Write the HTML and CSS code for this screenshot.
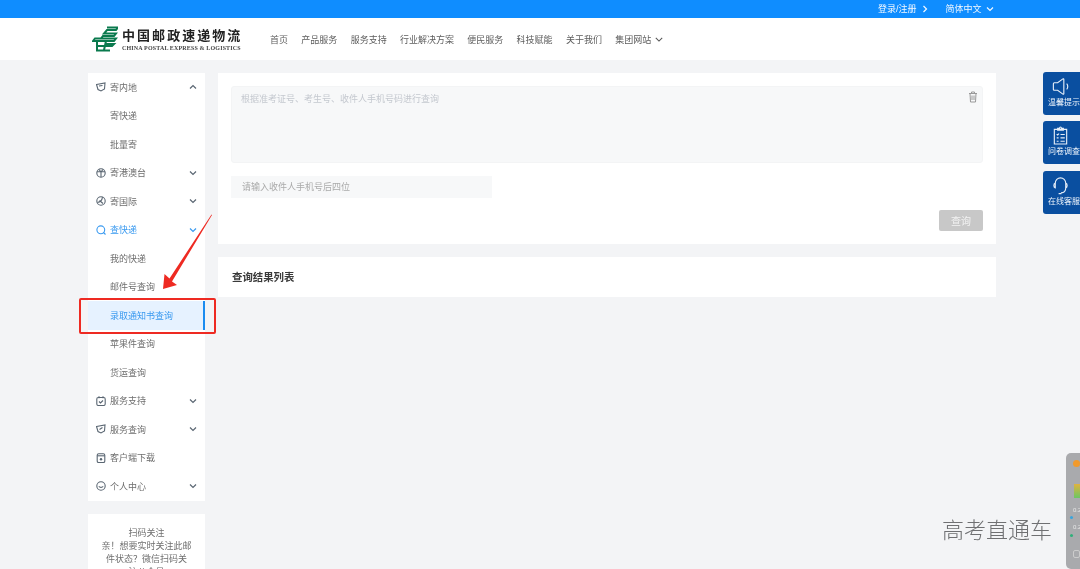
FILE: index.html
```html
<!DOCTYPE html>
<html lang="zh-CN">
<head>
<meta charset="utf-8">
<title>中国邮政速递物流</title>
<link rel="stylesheet" href="styles.css">
</head>
<body>
<div class="page">
  <div class="topbar">
    <span>登录/注册</span>
    <svg class="chev-r" viewBox="0 0 6 8"><path d="M1.500 1l3 3-3 3"/></svg>
    <span class="lang">简体中文</span>
    <svg class="chev-d" viewBox="0 0 8 6"><path d="M1 1.500l3 3 3-3"/></svg>
  </div>
  <header class="header">
    <div class="logo">
      <svg class="logo-mark" viewBox="0 0 26 26"><path d="M15 1.500h11L24 4H15L12 7.500h12L22 10H11L9 12.500H24L22 15H1L3 12.500H9M5 15v9.500h13M5 20h15l2-2H14M14 15l-2 9"/></svg>
      <div class="logo-text">
        <div class="logo-cn">中国邮政速递物流</div>
        <div class="logo-en">CHINA POSTAL EXPRESS &amp; LOGISTICS</div>
      </div>
    </div>
    <nav class="nav">
      <a>首页</a><a>产品服务</a><a>服务支持</a><a>行业解决方案</a><a>便民服务</a><a>科技赋能</a><a>关于我们</a>
      <a class="nav-more">集团网站<svg viewBox="0 0 10 6"><path d="M1 1l4 4 4-4"/></svg></a>
    </nav>
  </header>
  <main class="layout">
    <aside class="side">
      <ul class="menu">
        <li class="row"><svg class="ico" viewBox="0 0 10 10"><path d="M.5 2.500l8.500-1.500-.5 6-3.500 2L2 7.500zM3 4l3.500-.5"/></svg><span>寄内地</span><svg class="arrow" viewBox="0 0 8 6"><path d="M1 4.500l3-3 3 3"/></svg></li>
        <li class="row sub"><span>寄快递</span></li>
        <li class="row sub"><span>批量寄</span></li>
        <li class="row"><svg class="ico" viewBox="0 0 10 10"><circle cx="5" cy="5" r="4.200"/><path d="M1 3.800h8M5 3.800v5.200M3 1.500l2 2.300 2-2.300"/></svg><span>寄港澳台</span><svg class="arrow" viewBox="0 0 8 6"><path d="M1 1.500l3 3 3-3"/></svg></li>
        <li class="row"><svg class="ico" viewBox="0 0 10 10"><circle cx="5" cy="5" r="4.200"/><path d="M1.500 6.500C4 6.200 6 4.500 6.500 1.200M3.500 4.500l3.500 3"/></svg><span>寄国际</span><svg class="arrow" viewBox="0 0 8 6"><path d="M1 1.500l3 3 3-3"/></svg></li>
        <li class="row on"><svg class="ico" viewBox="0 0 10 10"><circle cx="4.800" cy="4.800" r="3.900"/><path d="M7.500 7.500l2 2"/></svg><span>查快递</span><svg class="arrow" viewBox="0 0 8 6"><path d="M1 1.500l3 3 3-3"/></svg></li>
        <li class="row sub"><span>我的快递</span></li>
        <li class="row sub"><span>邮件号查询</span></li>
        <li class="row sub active"><span>录取通知书查询</span></li>
        <li class="row sub"><span>苹果件查询</span></li>
        <li class="row sub"><span>货运查询</span></li>
        <li class="row"><svg class="ico" viewBox="0 0 10 10"><rect x=".8" y="1.500" width="8.400" height="8" rx="1.500"/><path d="M3 5.500l1.500 1.500L7 4.500M3 .3v2M7 .3v2"/></svg><span>服务支持</span><svg class="arrow" viewBox="0 0 8 6"><path d="M1 1.500l3 3 3-3"/></svg></li>
        <li class="row"><svg class="ico" viewBox="0 0 10 10"><path d="M.5 2.500l8.500-1.500-.5 6-3.500 2L2 7.500zM3.500 5.500L6.500 3.500"/></svg><span>服务查询</span><svg class="arrow" viewBox="0 0 8 6"><path d="M1 1.500l3 3 3-3"/></svg></li>
        <li class="row"><svg class="ico" viewBox="0 0 10 10"><rect x="1.200" y=".8" width="7.600" height="8.800" rx="1.500"/><path d="M1.200 2.800h7.600"/><circle class="ico-dot" cx="5" cy="6.200" r="1.200"/></svg><span>客户端下载</span></li>
        <li class="row"><svg class="ico" viewBox="0 0 10 10"><circle cx="5" cy="5" r="4.200"/><path d="M2.800 5.200c1 1.500 3.400 1.500 4.400 0"/></svg><span>个人中心</span><svg class="arrow" viewBox="0 0 8 6"><path d="M1 1.500l3 3 3-3"/></svg></li>
      </ul>
      <div class="qr-card">扫码关注<br>亲！想要实时关注此邮<br>件状态？微信扫码关<br>注公众号</div>
    </aside>
    <section class="content">
      <div class="card form">
        <div class="textarea">
          <span>根据准考证号、考生号、收件人手机号码进行查询</span>
          <svg class="trash" viewBox="0 0 10 12"><path d="M1 2.500h8M3.500 2.500V1h3v1.500M2 2.500l.5 8.500h5l.5-8.500M4 4.500V9M6 4.500V9"/></svg>
        </div>
        <div class="input">请输入收件人手机号后四位</div>
        <div class="actions"><button class="btn">查询</button></div>
      </div>
      <div class="card result">查询结果列表</div>
    </section>
  </main>

  <div class="float-tools">
    <div class="tool"><svg viewBox="0 0 20 18"><path d="M2.500 6c0-.8.5-1 1-1H7l5.500-4c.5-.3 1 0 1 .5v15c0 .5-.5.8-1 .5L7 13H3.500c-.5 0-1-.3-1-1zM16.500 6c1.500 1.500 1.500 4.500 0 6"/></svg><span>温馨提示</span></div>
    <div class="tool"><svg viewBox="0 0 20 20"><path d="M3.500 3.500h13V19h-13zM7 4.500V2.500h2c0-2 2-2 2 0h2v2zM6 8.500l1 1 1.500-1.500M10 9h4.500M6 12.500h2M10 12.500h4.500M6 16h2M10 16h4.500"/></svg><span>问卷调查</span></div>
    <div class="tool"><svg viewBox="0 0 20 20"><path d="M4.500 9V7.500a5.500 5.500 0 0 1 11 0V9M4.500 7.500C2.500 8 2.500 12 4.500 12.500ZM15.500 7.500c2 .5 2 4.500 0 5ZM15.500 12.500c0 3-2 5-5 5.200M8 18.500h3"/></svg><span>在线客服</span></div>
  </div>

  <div class="red-box"></div>
  <svg class="red-arrow" viewBox="0 0 60 85"><path class="head" d="M52 3L12 69.500 17 73 3 77 4.500 62 9.500 66.500 51.500 2.500z"/></svg>

  <div class="widget">
    <i class="w-badge"></i>
    <i class="w-thumb"></i>
    <b class="w-num w-n1">0.2</b>
    <i class="w-dot w-d1"></i>
    <b class="w-num w-n2">0.2</b>
    <i class="w-dot w-d2"></i>
    <i class="w-cam"></i>
  </div>
  <div class="watermark">高考直通车</div>
</div>
</body>
</html>
```
FILE: styles.css
```css
* { box-sizing: border-box; }
html, body { margin: 0; padding: 0; }
body { font-family: "Liberation Sans", "Noto Sans CJK SC", sans-serif; background: #f3f4f6; overflow: hidden; }
.page { position: relative; width: 1080px; height: 569px; overflow: hidden; background: #f3f4f6; filter: blur(.5px); color: #6e6e6e; font-size: 9px; }
svg { fill: none; display: block; }

.topbar { height: 18px; background: #0f8dff; color: #f2f8ff; display: flex; align-items: center; padding-left: 878px; line-height: 18px; }
.topbar svg { stroke: #f2f8ff; stroke-width: 1.200; }
.chev-r { width: 6px; height: 8px; margin-left: 5px; }
.lang { margin-left: 18px; }
.chev-d { width: 8px; height: 6px; margin-left: 4px; }

.header { height: 42px; background: #fff; display: flex; align-items: center; padding-left: 92px; }
.logo { display: flex; align-items: center; width: 178px; }
.logo-mark { width: 26px; height: 26px; stroke: #0a7a4e; stroke-width: 2; flex: none; }
.logo-text { margin-left: 4px; white-space: nowrap; }
.logo-cn { font-size: 13px; line-height: 15px; font-weight: 700; color: #222; letter-spacing: 2.050px; font-family: "Noto Sans CJK SC", sans-serif; }
.logo-en { font-family: "Liberation Serif", serif; font-weight: 700; font-size: 6px; line-height: 8px; color: #444; letter-spacing: .15px; margin-top: 2px; }
.nav { display: flex; align-items: center; gap: 13.300px; color: #5c5c5c; }
.nav-more { display: flex; align-items: center; }
.nav-more svg { width: 8px; height: 5px; margin-left: 4px; stroke: #555; stroke-width: 1.300; }

.layout { display: flex; gap: 13px; padding: 13px 0 0 88px; }
.side { width: 117px; flex: none; display: flex; flex-direction: column; gap: 13.500px; }
.menu { list-style: none; margin: 0; padding: 0; background: #fff; }
.row { position: relative; height: 28.500px; display: flex; align-items: center; padding-left: 8px; color: #6e6e6e; }
.row span { margin-left: 4px; }
.ico { width: 10px; height: 10px; stroke: #5a6672; stroke-width: 1.100; flex: none; }
.ico-dot { fill: #5a6672; stroke: none; }
.arrow { position: absolute; right: 8px; top: 11px; width: 8px; height: 6px; stroke: #5a6672; stroke-width: 1.200; }
.sub { padding-left: 22px; }
.sub span { margin-left: 0; }
.on { color: #3a9af0; }
.on .ico, .on .arrow { stroke: #3a9af0; }
.active { background: #e6f2ff; color: #3a9af0; }
.active::after { content: ""; position: absolute; right: 0; top: 0; bottom: 0; width: 2.500px; background: #1c8cf0; }
.qr-card { background: #fff; padding: 13px 0; height: 80px; text-align: center; line-height: 13px; color: #6e6e6e; overflow: hidden; }

.content { width: 778px; display: flex; flex-direction: column; gap: 13px; }
.card { background: #fff; }
.form { height: 171px; padding: 13px; display: flex; flex-direction: column; }
.textarea { position: relative; height: 77px; background: #f7f8f9; border: 1px solid #f3f4f5; border-radius: 3px; padding: 6px 9px; color: #c4c8cf; line-height: 12px; }
.trash { position: absolute; right: 4px; top: 4px; width: 10px; height: 12px; stroke: #999; stroke-width: 1; }
.input { width: 261px; height: 22px; margin-top: 13px; background: #f7f8f9; padding-left: 11px; line-height: 22px; color: #aaa; }
.actions { display: flex; justify-content: flex-end; margin-top: 12px; }
.btn { width: 44px; height: 21px; border: 0; border-radius: 2px; background: #c8c8c8; color: #f3f3f3; font: inherit; font-size: 10px; padding: 0; }
.result { height: 40px; padding-left: 14px; line-height: 41px; font-size: 10.400px; font-weight: 700; color: #3a3a3a; }

.float-tools { position: absolute; left: 1043px; top: 72px; width: 37px; display: flex; flex-direction: column; gap: 6.300px; }
.tool { height: 43px; background: #0a4fa0; border-radius: 3px 0 0 3px; display: flex; flex-direction: column; align-items: center; padding-top: 5px; color: #eef4fb; white-space: nowrap; font-size: 8px; line-height: 10px; }
.tool svg { width: 19px; height: 19px; stroke: #e6eef8; stroke-width: 1.200; margin-right: 2px; margin-bottom: 2px; flex: none; }
.tool span { align-self: flex-start; margin-left: 5px; }

.red-box { position: absolute; left: 79px; top: 298px; width: 137px; height: 36px; border: 2px solid #ee2a22; border-radius: 2px; }
.red-arrow { position: absolute; left: 160px; top: 212px; width: 60px; height: 85px; }
.head { fill: #ee2a22; }

.widget { position: absolute; left: 1066px; top: 453px; width: 14px; height: 116px; background: #a9aaad; border-radius: 5px 0 0 5px; overflow: hidden; }
.widget i { position: absolute; display: block; }
.w-badge { left: 7px; top: 7px; width: 7px; height: 7px; background: #f19a2c; border-radius: 50%; }
.w-thumb { left: 8px; top: 31px; width: 6px; height: 14px; background: linear-gradient(#e0b23e, #6bc764); }
.w-num { position: absolute; left: 7px; font-size: 6px; line-height: 8px; font-weight: 400; color: #e8e8e8; }
.w-n1 { top: 53px; }
.w-n2 { top: 70px; }
.w-dot { left: 4px; width: 3px; height: 3px; border-radius: 50%; }
.w-d1 { top: 63px; background: #3aa5dc; }
.w-d2 { top: 81px; background: #2fb07a; }
.w-cam { left: 7px; top: 97px; width: 7px; height: 8px; border: 1px solid #ccc; border-radius: 2px; }

.watermark { position: absolute; left: 942px; top: 514px; font-size: 22px; line-height: 28px; color: #6f7072; font-family: "Noto Sans CJK SC", sans-serif; font-weight: 300; white-space: nowrap; }
```
